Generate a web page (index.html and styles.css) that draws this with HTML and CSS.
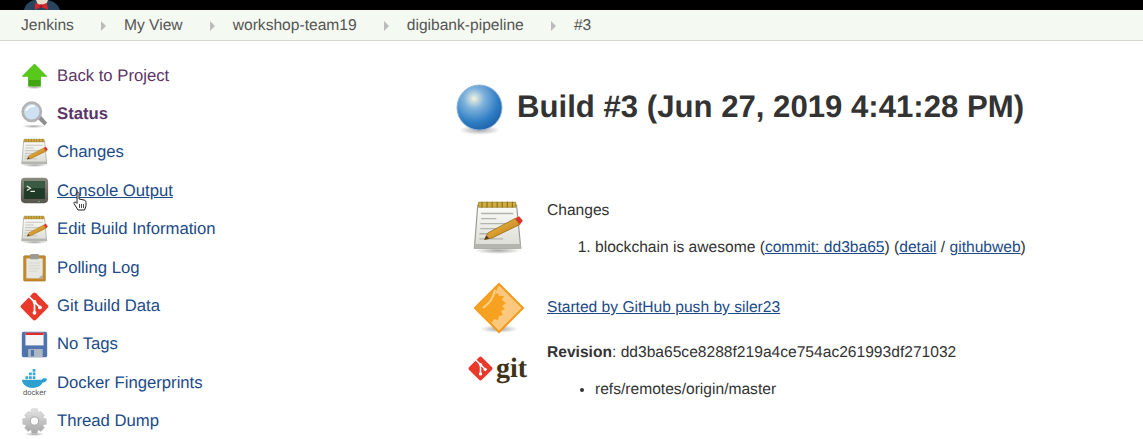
FILE: index.html
```html
<!DOCTYPE html>
<html lang="en">
<head>
<meta charset="utf-8">
<title>Build #3</title>
<link rel="stylesheet" href="styles.css">
</head>
<body>
<svg class="defs" width="0" height="0" aria-hidden="true">
  <defs>
    <linearGradient id="paper" x1="0" y1="0" x2="0" y2="1"><stop offset="0" stop-color="#fbfbf8"/><stop offset="1" stop-color="#dcdcd6"/></linearGradient>
    <linearGradient id="pen" x1="0" y1="0" x2="1" y2="1"><stop offset="0" stop-color="#f4c04e"/><stop offset="1" stop-color="#b9780f"/></linearGradient>
    <radialGradient id="ball" cx="0.38" cy="0.3" r="0.75"><stop offset="0" stop-color="#f3f3de"/><stop offset="0.3" stop-color="#7fb2dc"/><stop offset="0.7" stop-color="#2f7ec4"/><stop offset="1" stop-color="#1d5fa6"/></radialGradient>
    <radialGradient id="shadow"><stop offset="0" stop-color="#000" stop-opacity=".35"/><stop offset="1" stop-color="#000" stop-opacity="0"/></radialGradient>
    <linearGradient id="gear" x1="0" y1="0" x2="0" y2="1"><stop offset="0" stop-color="#e4e4e4"/><stop offset="1" stop-color="#a6a6a6"/></linearGradient>
    <linearGradient id="console" x1="0" y1="0" x2="0" y2="1"><stop offset="0" stop-color="#8a8a80"/><stop offset="1" stop-color="#55554d"/></linearGradient>
    <symbol id="notepad" viewBox="0 0 32 32">
      <ellipse cx="16" cy="30" rx="14" ry="2" fill="url(#shadow)"/>
      <path d="M4 3h23l2.500 25.500H2z" fill="url(#paper)" stroke="#9a9a94" stroke-width=".7"/>
      <path d="M2 26h27.500v2.500H2z" fill="#b5b5b0"/>
      <path d="M4.500 1.300h22v3h-22z" fill="#d3ac3c" stroke="#8b7220" stroke-width=".4"/>
      <path d="M6.500 1v3.500M9.500 1v3.500M12.500 1v3.500M15.500 1v3.500M18.500 1v3.500M21.500 1v3.500M24.500 1v3.500" stroke="#7f6a1f" stroke-width=".6"/>
      <path d="M6 8h19M6 11h9M5.500 14h19M5.500 17h12M5 20h10M5 23h14" stroke="#b4b4ae" stroke-width=".8"/>
      <path d="M8 23.500l2-4 16-8.500 3 3.500-16.500 8z" fill="url(#pen)" stroke="#8b5d0d" stroke-width=".4"/>
      <path d="M8 23.500l1-2.400 1.800 1.600z" fill="#4a3a1e"/>
      <path d="M26 11l3 3.500 1.700-2.200-2.200-2.700z" fill="#e0322d"/>
    </symbol>
    <symbol id="gitmark" viewBox="0 0 32 32">
      <rect x="4.500" y="4.500" width="23" height="23" rx="2.500" transform="rotate(45 16 16)" fill="#e8392a"/>
      <path d="M10 5l6 6M16 11v11.500M16 11l6 6" stroke="#fff" stroke-width="1.900" fill="none"/>
      <circle cx="16" cy="11" r="2.100" fill="#fff"/><circle cx="16" cy="23" r="2.100" fill="#fff"/><circle cx="22" cy="17" r="2.100" fill="#fff"/>
    </symbol>
  </defs>
</svg>

<div class="topbar"><svg class="butler" viewBox="0 0 40 10" width="40" height="10"><path d="M2 10c1-6 6-9 10-10h14c5 1 10 4 12 10z" fill="#27455e"/><path d="M14 0h12l-2 5h-8z" fill="#e8dcc8"/><path d="M13 3l6 2 6-2 1 7-7-3-6 3z" fill="#d6272c"/><circle cx="19" cy="6" r="1.800" fill="#a81a1e"/></svg></div>

<nav class="crumbs">
  <a href="#">Jenkins</a><span class="arrow"></span>
  <a href="#">My View</a><span class="arrow"></span>
  <a href="#">workshop-team19</a><span class="arrow"></span>
  <a href="#">digibank-pipeline</a><span class="arrow"></span>
  <a href="#">#3</a>
</nav>

<div class="layout">
  <aside class="side">
    <a class="task visited" href="#">
      <svg class="ico" viewBox="0 0 32 32"><ellipse cx="16" cy="29" rx="10" ry="2" fill="url(#shadow)"/><path d="M16 3L30 17h-7v11H9V17H2z" fill="#3fa512"/><path d="M16 3L30 17h-7v4H9v-4H2z" fill="#58c81a"/></svg>
      <span>Back to Project</span>
    </a>
    <a class="task visited current" href="#">
      <svg class="ico" viewBox="0 0 32 32"><ellipse cx="15" cy="29" rx="13" ry="2" fill="url(#shadow)"/><path d="M19 20l4-3 7 8-3 3z" fill="#8f8f8f"/><circle cx="13" cy="13" r="10" fill="#cfe0f2" stroke="#b3b3b3" stroke-width="3"/><path d="M7 12a7 6 0 0 1 9-5" stroke="#fff" stroke-width="2" fill="none"/></svg>
      <span>Status</span>
    </a>
    <a class="task" href="#"><svg class="ico"><use href="#notepad"/></svg><span>Changes</span></a>
    <a class="task hover" href="#">
      <svg class="ico" viewBox="0 0 32 32"><rect x="1" y="2" width="30" height="28" rx="4.500" fill="url(#console)"/><rect x="4.500" y="5.500" width="23" height="20" rx="1" fill="#1f3b28"/><path d="M4.500 5.500h23v8h-23z" fill="#3a5a42"/><path d="M7.500 11l4 2.500-4 2.500M11.500 17h5" stroke="#e6efe6" stroke-width="1.300" fill="none"/><circle cx="21" cy="28" r=".8" fill="#7fd05a"/></svg>
      <span>Console Output</span>
    </a>
    <a class="task" href="#"><svg class="ico"><use href="#notepad"/></svg><span>Edit Build Information</span></a>
    <a class="task" href="#">
      <svg class="ico" viewBox="0 0 32 32"><rect x="4" y="3" width="24" height="28" rx="1" fill="#c68a2c" stroke="#a26d1c" stroke-width=".6"/><path d="M7 6h18v22H7z" fill="#e7e7e2"/><path d="M25 24v4h-5z" fill="#a9a9a4"/><rect x="11" y="1" width="10" height="6" rx="1.500" fill="#9b9b93"/><path d="M10 11h12M10 14h12M10 17h12M10 20h9" stroke="#d3d3cc" stroke-width=".8"/></svg>
      <span>Polling Log</span>
    </a>
    <a class="task" href="#"><svg class="ico"><use href="#gitmark"/></svg><span>Git Build Data</span></a>
    <a class="task" href="#">
      <svg class="ico" viewBox="0 0 32 32"><rect x="2" y="2" width="28" height="28" rx="2" fill="#4f74ad"/><rect x="6" y="3" width="20" height="14" fill="#f6f6f6"/><rect x="6" y="3" width="20" height="2.500" fill="#e02b2b"/><rect x="9" y="21" width="16" height="9" fill="#aeb8c4"/><rect x="12" y="22" width="3.500" height="7" fill="#4f74ad"/></svg>
      <span>No Tags</span>
    </a>
    <a class="task" href="#">
      <svg class="ico" viewBox="0 0 32 32"><path d="M2 13h22c1-2 4-2 6-1-1 3-3 4-5 4-2 4-6 6-11 6-6 0-11-3-12-9z" fill="#2f9fd0"/><path d="M6 9h3v3H6zM10 9h3v3h-3zM14 9h3v3h-3zM10 5h3v3h-3zM14 5h3v3h-3zM14 1h3v3h-3z" fill="#3aa7d6"/><text class="dockerword" x="16" y="30" text-anchor="middle">docker</text></svg>
      <span>Docker Fingerprints</span>
    </a>
    <a class="task" href="#">
      <svg class="ico" viewBox="0 0 32 32"><ellipse cx="16" cy="30" rx="11" ry="2" fill="url(#shadow)"/><path d="M13 2h6l1 4 3-1 4 4-2 3 4 1v6l-4 1 2 3-4 4-3-2-1 4h-6l-1-4-3 2-4-4 2-3-4-1v-6l4-1-2-3 4-4 3 1z" fill="url(#gear)" stroke="#bcbcbc" stroke-width=".5"/><circle cx="16" cy="15.500" r="4.500" fill="#fff" stroke="#a5a5a5"/></svg>
      <span>Thread Dump</span>
    </a>
  </aside>

  <main class="main">
    <h1 class="title">
      <svg class="ball" viewBox="0 0 48 52"><ellipse cx="24" cy="46" rx="21" ry="5" fill="url(#shadow)"/><circle cx="24" cy="23" r="23" fill="url(#ball)" stroke="#8db4dc" stroke-width="1"/></svg>
      <span>Build #3 (Jun 27, 2019 4:41:28 PM)</span>
    </h1>
    <div class="rows">
      <section class="row changes">
        <svg class="big-note"><use href="#notepad"/></svg>
        <div>
          <div class="label">Changes</div>
          <ol class="list">
            <li>blockchain is awesome (<a href="#">commit: dd3ba65</a>) (<a href="#">detail</a> / <a href="#">githubweb</a>)</li>
          </ol>
        </div>
      </section>
      <section class="row started">
        <svg class="trigger" viewBox="0 0 52 52"><ellipse cx="26" cy="47" rx="19" ry="4" fill="url(#shadow)"/><path d="M26 2l24 24-24 24L2 26z" fill="#fbc97e" stroke="#f39a1c" stroke-width="2"/><path d="M26 3L3 26l15 16 3-5 4 1 1-4 4-1-2-4 4-2-3-3 4-3-4-3 2-4-5 0-1-3-3 1z" fill="#f6a11f"/><path d="M22 8c-2 8-4 12-12 18" stroke="#fbd08e" stroke-width="2" fill="none"/></svg>
        <a href="#">Started by GitHub push by siler23</a>
      </section>
      <section class="row revision">
        <div class="gitlogo"><svg class="gitmark"><use href="#gitmark"/></svg><span class="gitword">git</span></div>
        <div>
          <div><b>Revision</b>: dd3ba65ce8288f219a4ce754ac261993df271032</div>
          <ul class="list refs"><li>refs/remotes/origin/master</li></ul>
        </div>
      </section>
    </div>
  </main>
</div>

<svg class="cursor" viewBox="0 0 16 20" width="16" height="20"><path d="M5 1.500c1-.8 2 0 2 1V8l5 1c1.500.5 2 1 2 2.500V15l-1.500 4H6L2 12.500c-.5-1.500 1-2 2-1l1 1z" fill="#fff" stroke="#222" stroke-width="1"/><path d="M7.500 13v4M9.500 13v4M11.500 13v4" stroke="#222" stroke-width=".8"/></svg>
</body>
</html>
```

FILE: styles.css
```css
* { box-sizing: border-box; }
html, body { margin: 0; padding: 0; height: 439px; overflow: hidden; }
body {
  position: relative;
  background: #fff;
  color: #333;
  font-family: "Liberation Sans", Arial, sans-serif;
  font-size: 15.6px;
  text-rendering: geometricPrecision;
}
.defs { position: absolute; }
.topbar { height: 10px; background: #000; padding-left: 22px; display: flex; }
.butler { display: block; }
.crumbs {
  height: 31px;
  background: #f4f9f1;
  border-bottom: 1px solid #d3d7c9;
  display: flex;
  align-items: center;
  padding: 1px 0 0 21px;
}
.crumbs a { color: #555; text-decoration: none; }
.arrow {
  width: 0; height: 0;
  margin: 0 18.100px 0 27px;
  border-left: 5px solid #bbb;
  border-top: 5px solid transparent;
  border-bottom: 5px solid transparent;
}
.layout { display: flex; }
.side {
  width: 446px;
  padding: 15.500px 0 0 20px;
  display: flex;
  flex-direction: column;
  font-size: 16.7px;
}
.task {
  height: 38.4px;
  display: flex;
  align-items: center;
  gap: 8px;
  color: #204a87;
  text-decoration: none;
}
.ico { width: 29px; height: 29px; flex: none; overflow: visible; }
.task.visited { color: #5c3566; }
.task.current { font-weight: 700; }
.task.hover span { text-decoration: underline; }
.dockerword { font: 8.500px "Liberation Sans", sans-serif; fill: #555; }
.main { flex: 1; padding-top: 44px; }
.title {
  margin: 0;
  height: 42px;
  display: flex;
  align-items: flex-start;
  gap: 14px;
  padding-left: 10px;
  font-size: 31.150px;
  line-height: 44px;
  font-weight: 700;
  color: #333;
}
.ball { width: 47px; height: 51px; flex: none; overflow: visible; }
.rows { padding-top: 74px; }
.row { display: flex; gap: 22px; }
.row a { color: #204a87; }
.big-note { width: 54px; height: 56px; flex: none; margin: -2px 0 0 25px; }
.label { margin-bottom: 19px; padding-top: 1px; }
.list { margin: 0; padding-left: 48px; line-height: 18px; }
.changes { height: 79px; }
.started { align-items: center; height: 56px; }
.trigger { width: 52px; height: 52px; flex: none; margin-left: 27px; }
.revision { padding-top: 8px; }
.gitlogo { width: 57px; height: 25px; margin: 12px 0 0 22px; display: flex; align-items: center; gap: 3px; flex: none; }
.gitmark { width: 25px; height: 25px; flex: none; }
.gitword { font: 700 28px "Liberation Serif", serif; color: #40331a; line-height: 24px; }
.refs { margin-top: 19px; list-style: disc; }
.cursor { position: absolute; left: 72px; top: 191px; }
```
